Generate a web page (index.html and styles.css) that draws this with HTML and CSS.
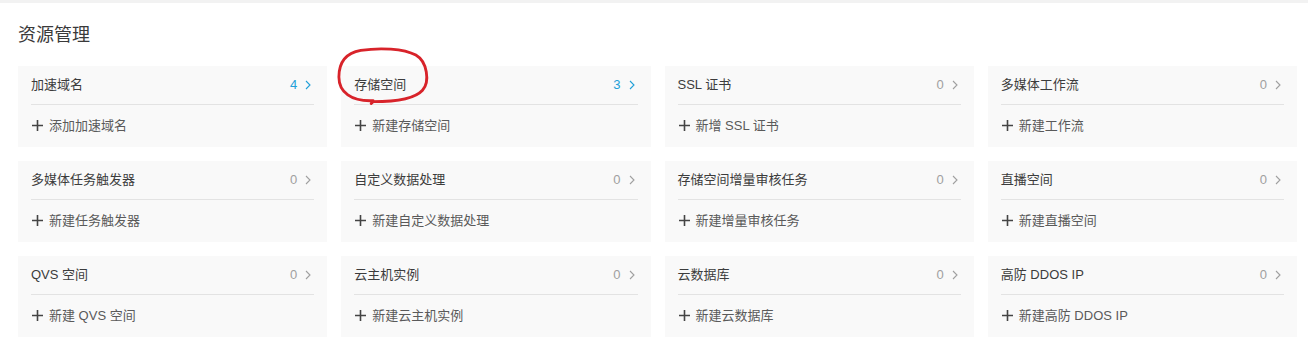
FILE: index.html
```html
<!DOCTYPE html>
<html lang="zh-CN">
<head>
<meta charset="utf-8">
<title>资源管理</title>
<link rel="stylesheet" href="styles.css">
</head>
<body>
<div class="topbar"></div>
<main class="page">
  <h1 class="title">资源管理</h1>
  <div class="grid">
    <div class="card">
      <div class="card-head"><span class="name">加速域名</span><span class="count active">4<svg class="chev" viewBox="0 0 6 10"><path d="M1 1l4 4-4 4"/></svg></span></div>
      <div class="card-add"><svg class="plus" viewBox="0 0 11 11"><path d="M5.5 0v11M0 5.5h11"/></svg>添加加速域名</div>
    </div>
    <div class="card annotated">
      <div class="card-head"><span class="name">存储空间</span><span class="count active">3<svg class="chev" viewBox="0 0 6 10"><path d="M1 1l4 4-4 4"/></svg></span></div>
      <div class="card-add"><svg class="plus" viewBox="0 0 11 11"><path d="M5.5 0v11M0 5.5h11"/></svg>新建存储空间</div>
      <svg class="ring" viewBox="0 0 100 60"><path d="M38 56 C15 57 2 47 2 31 C2 16 8 6 25 3 C45 0 70 1 83 8 C95 15 98 36 90 45 C82 54 62 57 38 57 L36 59"/></svg>
    </div>
    <div class="card">
      <div class="card-head"><span class="name">SSL 证书</span><span class="count">0<svg class="chev" viewBox="0 0 6 10"><path d="M1 1l4 4-4 4"/></svg></span></div>
      <div class="card-add"><svg class="plus" viewBox="0 0 11 11"><path d="M5.5 0v11M0 5.5h11"/></svg>新增 SSL 证书</div>
    </div>
    <div class="card">
      <div class="card-head"><span class="name">多媒体工作流</span><span class="count">0<svg class="chev" viewBox="0 0 6 10"><path d="M1 1l4 4-4 4"/></svg></span></div>
      <div class="card-add"><svg class="plus" viewBox="0 0 11 11"><path d="M5.5 0v11M0 5.5h11"/></svg>新建工作流</div>
    </div>

    <div class="card">
      <div class="card-head"><span class="name">多媒体任务触发器</span><span class="count">0<svg class="chev" viewBox="0 0 6 10"><path d="M1 1l4 4-4 4"/></svg></span></div>
      <div class="card-add"><svg class="plus" viewBox="0 0 11 11"><path d="M5.5 0v11M0 5.5h11"/></svg>新建任务触发器</div>
    </div>
    <div class="card">
      <div class="card-head"><span class="name">自定义数据处理</span><span class="count">0<svg class="chev" viewBox="0 0 6 10"><path d="M1 1l4 4-4 4"/></svg></span></div>
      <div class="card-add"><svg class="plus" viewBox="0 0 11 11"><path d="M5.5 0v11M0 5.5h11"/></svg>新建自定义数据处理</div>
    </div>
    <div class="card">
      <div class="card-head"><span class="name">存储空间增量审核任务</span><span class="count">0<svg class="chev" viewBox="0 0 6 10"><path d="M1 1l4 4-4 4"/></svg></span></div>
      <div class="card-add"><svg class="plus" viewBox="0 0 11 11"><path d="M5.5 0v11M0 5.5h11"/></svg>新建增量审核任务</div>
    </div>
    <div class="card">
      <div class="card-head"><span class="name">直播空间</span><span class="count">0<svg class="chev" viewBox="0 0 6 10"><path d="M1 1l4 4-4 4"/></svg></span></div>
      <div class="card-add"><svg class="plus" viewBox="0 0 11 11"><path d="M5.5 0v11M0 5.5h11"/></svg>新建直播空间</div>
    </div>

    <div class="card">
      <div class="card-head"><span class="name">QVS 空间</span><span class="count">0<svg class="chev" viewBox="0 0 6 10"><path d="M1 1l4 4-4 4"/></svg></span></div>
      <div class="card-add"><svg class="plus" viewBox="0 0 11 11"><path d="M5.5 0v11M0 5.5h11"/></svg>新建 QVS 空间</div>
    </div>
    <div class="card">
      <div class="card-head"><span class="name">云主机实例</span><span class="count">0<svg class="chev" viewBox="0 0 6 10"><path d="M1 1l4 4-4 4"/></svg></span></div>
      <div class="card-add"><svg class="plus" viewBox="0 0 11 11"><path d="M5.5 0v11M0 5.5h11"/></svg>新建云主机实例</div>
    </div>
    <div class="card">
      <div class="card-head"><span class="name">云数据库</span><span class="count">0<svg class="chev" viewBox="0 0 6 10"><path d="M1 1l4 4-4 4"/></svg></span></div>
      <div class="card-add"><svg class="plus" viewBox="0 0 11 11"><path d="M5.5 0v11M0 5.5h11"/></svg>新建云数据库</div>
    </div>
    <div class="card">
      <div class="card-head"><span class="name">高防 DDOS IP</span><span class="count">0<svg class="chev" viewBox="0 0 6 10"><path d="M1 1l4 4-4 4"/></svg></span></div>
      <div class="card-add"><svg class="plus" viewBox="0 0 11 11"><path d="M5.5 0v11M0 5.5h11"/></svg>新建高防 DDOS IP</div>
    </div>
  </div>
</main>
</body>
</html>
```
FILE: styles.css
```css
* { box-sizing: border-box; }
html, body { margin: 0; padding: 0; background: #fff; }
body {
  font-family: "Liberation Sans", "Noto Sans CJK SC", sans-serif;
  color: #333;
  overflow: hidden;
}
.topbar { height: 3px; background: #f2f2f2; }
.page { padding: 20px 11px 0 18px; }
.title {
  margin: 0 0 19px;
  font-size: 18px;
  line-height: 24px;
  font-weight: normal;
  color: #3a3a3a;
}
.grid {
  display: grid;
  grid-template-columns: repeat(4, 1fr);
  column-gap: 14px;
  row-gap: 14px;
}
.card {
  position: relative;
  background: #f9f9f9;
  padding: 0 13px;
  height: 81px;
}
.card-head {
  height: 39px;
  display: flex;
  align-items: center;
  justify-content: space-between;
  border-bottom: 1px solid #e3e3e3;
  font-size: 13px;
  line-height: 18px;
  color: #3c3c3c;
}
.count {
  display: flex;
  align-items: center;
  color: #a0a0a0;
  font-size: 13px;
  padding-right: 3px;
}
.count.active { color: #22a0d8; }
.chev {
  width: 6px;
  height: 10px;
  margin-left: 8px;
  fill: none;
  stroke: currentColor;
  stroke-width: 1.1;
}
.card-add {
  height: 41px;
  display: flex;
  align-items: center;
  font-size: 13px;
  line-height: 18px;
  color: #5a5a5a;
}
.plus {
  width: 11px;
  height: 11px;
  margin: 0 6px 0 1px;
  stroke: #444;
  stroke-width: 1.6;
  fill: none;
}
.ring {
  position: absolute;
  left: -4px;
  top: -19px;
  width: 95px;
  height: 58px;
  fill: none;
  stroke: #d8232a;
  stroke-width: 3;
  stroke-linecap: round;
  stroke-linejoin: round;
  overflow: visible;
  pointer-events: none;
}
```
